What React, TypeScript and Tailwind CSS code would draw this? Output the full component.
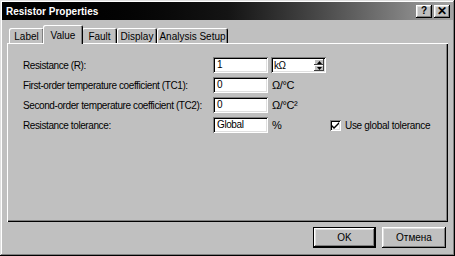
import React from 'react';

const raised = 'shadow-[inset_-1px_-1px_#000,inset_1px_1px_#fff,inset_-2px_-2px_#808080,inset_2px_2px_#dfdfdf]';
const thin = 'shadow-[inset_-1px_-1px_#404040,inset_1px_1px_#fff]';
const sunken = 'shadow-[inset_1px_1px_#808080,inset_-1px_-1px_#fff,inset_2px_2px_#000,inset_-2px_-2px_#dfdfdf]';

function Field({ value, w = 'w-[55px]' }: { value: string; w?: string }) {
    return (
        <div className={`${w} h-[16px] bg-white ${sunken} pl-[4px] flex items-center text-black text-[10px] leading-none`}>
            {value}
        </div>
    );
}

function Tab({ label, w, active }: { label: string; w: string; active?: boolean }) {
    if (active) {
        return (
            <div className={`${w} h-[19px] -mx-[1px] -mb-[1px] z-10 bg-[#c0c0c0] rounded-t-[2px] shadow-[inset_1px_1px_#fff,inset_-1px_0_#000,inset_-2px_0_#808080] flex items-start justify-center pt-[3px] text-[10px]`}>
                {label}
            </div>
        );
    }
    return (
        <div className={`${w} h-[15px] rounded-t-[2px] shadow-[inset_1px_1px_#fff,inset_-1px_0_#000,inset_-2px_0_#808080] flex items-center justify-center pt-[2px] text-[10px]`}>
            {label}
        </div>
    );
}

export default function App() {
    const rows = [
        { label: 'Resistance (R):', value: '1' },
        { label: 'First-order temperature coefficient (TC1):', value: '0', unit: 'Ω/°C' },
        { label: 'Second-order temperature coefficient (TC2):', value: '0', unit: 'Ω/°C²' },
        { label: 'Resistance tolerance:', value: 'Global', unit: '%' },
    ];

    return (
        <div className="w-[455px] h-[256px] bg-[#c0c0c0] p-[2px] flex flex-col text-black font-['Liberation_Sans',Arial,sans-serif] shadow-[inset_-1px_-1px_#000,inset_1px_1px_#dfdfdf,inset_-2px_-2px_#808080,inset_2px_2px_#fff]">
            {/* title bar */}
            <div className="h-[18px] flex items-center justify-between pl-[4px] pr-[3px] bg-linear-to-r from-black via-[#141414] to-[#a4a4a4]">
                <span className="text-white font-bold text-[10px]">Resistor Properties</span>
                <div className="flex gap-[2px]">
                    <div className={`w-[16px] h-[13px] bg-[#c0c0c0] ${raised} flex items-center justify-center text-[10px] font-bold leading-none`}>?</div>
                    <div className={`w-[16px] h-[13px] bg-[#c0c0c0] ${raised} flex items-center justify-center text-[12px] font-bold leading-none`}>✕</div>
                </div>
            </div>

            <div className="flex-1 flex flex-col px-[5px] pt-[5px]">
                {/* tabs */}
                <div className="h-[18px] flex items-end pl-[2px]">
                    <Tab label="Label" w="w-[35px]" />
                    <Tab label="Value" w="w-[40px]" active />
                    <Tab label="Fault" w="w-[35px]" />
                    <Tab label="Display" w="w-[40px]" />
                    <Tab label="Analysis Setup" w="w-[71px]" />
                </div>

                {/* panel */}
                <div className="h-[179px] shadow-[inset_1px_1px_#fff,inset_-1px_-1px_#000,inset_-2px_-2px_#808080] pt-[14px] pl-[16px] flex flex-col gap-[4px]">
                    {rows.map((row, idx) => (
                        <div key={idx} className="h-[16px] flex items-center text-[10px] tracking-[-0.4px]">
                            <span className="w-[190px]">{row.label}</span>
                            <Field value={row.value} />
                            {idx === 0 ? (
                                <div className={`ml-[3px] w-[55px] h-[16px] bg-white ${sunken} flex items-center justify-between pl-[3px] pr-[2px]`}>
                                    <span>kΩ</span>
                                    <div className="flex flex-col">
                                        <div className={`w-[10px] h-[6px] bg-[#c0c0c0] ${thin} flex items-center justify-center`}>
                                            <svg width="5" height="3" viewBox="0 0 5 3"><path d="M2.5 0L5 3H0z" fill="#000" /></svg>
                                        </div>
                                        <div className={`w-[10px] h-[6px] bg-[#c0c0c0] ${thin} flex items-center justify-center`}>
                                            <svg width="5" height="3" viewBox="0 0 5 3"><path d="M0 0h5L2.5 3z" fill="#000" /></svg>
                                        </div>
                                    </div>
                                </div>
                            ) : (
                                <span className="ml-[4px] w-[55px] text-[11px]">{row.unit}</span>
                            )}
                            {idx === 3 && (
                                <div className="flex items-center ml-[3px] tracking-normal">
                                    <div className={`w-[11px] h-[11px] bg-white ${sunken} flex items-center justify-center`}>
                                        <svg width="7" height="7" viewBox="0 0 7 7"><path d="M0 3l2 2 5-5v2L2 7 0 5z" fill="#000" /></svg>
                                    </div>
                                    <span className="ml-[4px] tracking-[-0.3px]">Use global tolerance</span>
                                </div>
                            )}
                        </div>
                    ))}
                </div>

                {/* buttons */}
                <div className="flex justify-end gap-[6px] mt-[5px] pr-[2px]">
                    <div className="w-[63px] h-[21px] border border-black">
                        <div className={`w-full h-full ${raised} flex items-center justify-center text-[10px]`}>OK</div>
                    </div>
                    <div className={`w-[64px] h-[21px] ${raised} flex items-center justify-center text-[10px]`}>Отмена</div>
                </div>
            </div>
        </div>
    );
}
